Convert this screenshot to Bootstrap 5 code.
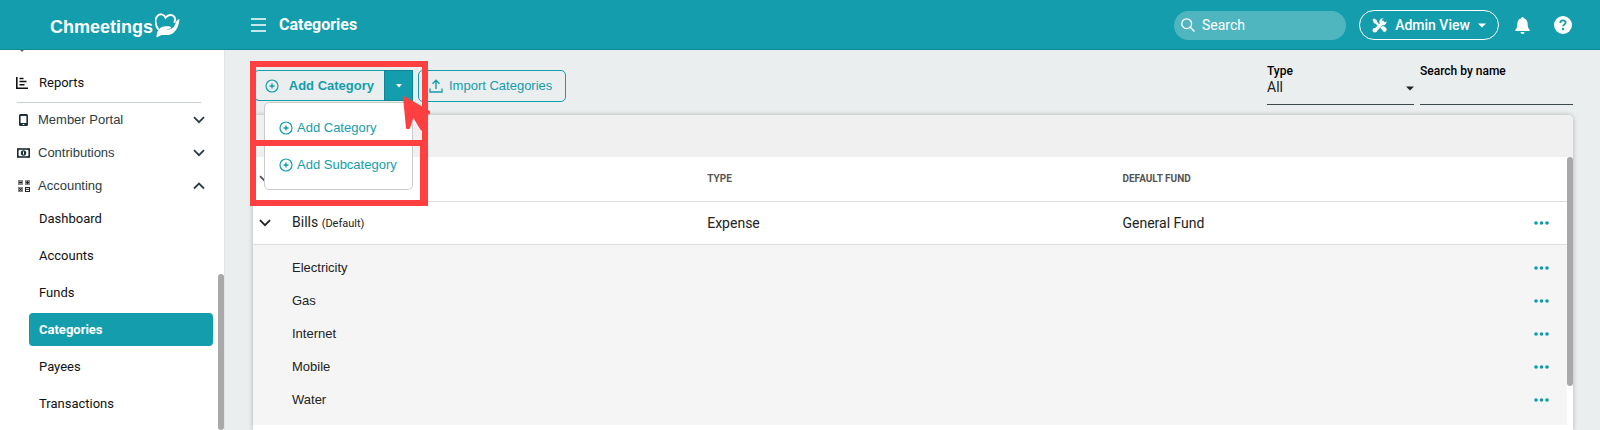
<!DOCTYPE html>
<html lang="en">
<head>
<meta charset="utf-8">
<meta name="viewport" content="width=device-width, initial-scale=1">
<title>Categories - Chmeetings</title>
<link href="https://cdn.jsdelivr.net/npm/bootstrap@5.3.0/dist/css/bootstrap.min.css" rel="stylesheet">
<style>
:root { --teal: #149dac; --mark-red: #ff4040; }
body { font-family: Roboto, "Liberation Sans", sans-serif; font-size: 14px; line-height: 20px; background: #eaeeef; color: #111; }
.arial { font-family: "Liberation Sans", Arial, sans-serif; }
svg { display: block; flex: none; }
.topbar { height: 50px; background: var(--teal); box-shadow: inset 0 -1px #108a98; color: #fff; padding-right: 28px; }
.brand-zone { width: 224px; padding-left: 50px; gap: 2px; }
.brand-name { font-weight: 700; font-size: 18px; line-height: 24px; color: #fff; }
.menu-toggle { margin-left: 27px; }
.page-title { font-size: 16px; line-height: 20px; font-weight: 700; padding-left: 13px; }
.search-pill { width: 172px; height: 29px; background: #4fb6c0; padding: 0 8px 0 7px; gap: 7px; }
.search-pill input { min-width: 0; color: #fff; outline: 0; line-height: 20px; }
.search-pill input::placeholder { color: #fff; opacity: 1; }
.view-btn { height: 30px; width: 140px; font-size: 14px; line-height: 20px; font-weight: 500; color: #fff; border: 1px solid #fff; padding: 0; margin-left: 13px; }
.plain { background: none; border: 0; padding: 0; color: inherit; }
.sidebar { width: 225px; background: #fff; border-right: 1px solid #e2e5e6; flex: none; }
.side-nav a { color: #111; text-decoration: none; }
.side-nav .current { color: #fff; }
.side-top { padding-top: 14px; }
.side-link { height: 33px; padding: 0 13px 0 16px; gap: 7px; font-size: 13px; }
.side-link span { flex: 1; }
.side-nav .side-group { color: #2c3e43; }
.side-rule { margin: 3px 17px 0 17px; border: 0; border-top: 1px solid #c9d0d2; opacity: 1; }
.sub-link { height: 33px; margin: 0 5px 4px 29px; padding-left: 10px; font-size: 13px; border-radius: 4px; }
.sub-link.current { background: var(--teal); font-weight: 700; }
.thumb { width: 6px; border-radius: 3px; background: #a9a9a9; flex: none; }
.side-thumb { margin-top: 224px; }
.content { padding: 14px 27px 0 28px; min-width: 0; }
.toolbar { height: 51px; }
.actions { padding-top: 6px; }
.btn-line { height: 32px; border: 1px solid var(--teal); color: var(--teal); font-size: 13px; line-height: 20px; padding: 0 10px; }
.btn-line.add { width: 132px; font-weight: 700; height: 31px; padding: 0 11px 0 11px; border-right: 0; }
.btn-drop { width: 29px; height: 31px; background: var(--teal); border: 1px solid #0f8693; color: #fff; padding: 0; }
.import-btn { margin-left: 5px; width: 148px; border-radius: 5px; gap: 6px; }
.add-menu { display: block; top: 32px; left: 11px; width: 149px; height: 88px; min-width: 0; padding: 6px 0; border: 1px solid #c8cccd; border-radius: 5px; }
.add-menu .dropdown-item { height: 37px; padding: 0 0 0 14px; color: var(--teal); line-height: 20px; gap: 4px; font-size: 13px; }
.frame-mark { position: absolute; border: 6px solid var(--mark-red); z-index: 1010; pointer-events: none; left: -3px; width: 178px; }
.frame-top { top: -9px; height: 85px; }
.frame-bottom { top: 70px; height: 66px; border-right-width: 8px; }
.pointer-mark { position: absolute; left: 149px; top: 25px; z-index: 1011; pointer-events: none; }
.filter { width: 153px; margin-left: 6px; }
.filter.by-type { width: 147px; }
.filter label { font-size: 12px; line-height: 14px; font-weight: 500; display: block; color: #000; }
.filter select, .filter input { display: block; width: 100%; height: 27px; border: 0; border-bottom: 1px solid #3b484c; background-color: transparent; border-radius: 0; padding: 0 0 8px; font-size: 14px; line-height: 18px; outline: 0; color: #222; appearance: none; }
.filter .caret { position: absolute; right: 0; top: 22px; }
.panel { background: #fff; border-radius: 5px 5px 0 0; box-shadow: 0 0 5px rgba(0,0,0,.25); overflow: hidden; }
.panel-head { height: 42px; background: #f0f0f0; }
.cat-table { table-layout: fixed; border-collapse: separate; border-spacing: 0; width: 100%; }
.cat-table td, .cat-table th { padding: 0; vertical-align: middle; }
.cat-table thead th { height: 45px; border-bottom: 1px solid #dedede; font-size: 10px; font-weight: 700; color: #555; }
.cat-table .parent td { height: 43px; border-bottom: 1px solid #dedede; font-size: 14px; color: #222; }
.cat-table .parent small { font-size: 11px; }
.cat-table .child td { height: 33px; background: #f5f5f5; color: #222; font-size: 13px; }
.cat-table .spacer td { background: #f5f5f5; height: 6px; }
.cat-table .spacer.end td { height: 9px; }
.col-icon { width: 39px; } .col-text { width: 31.6%; } .col-more { width: 60px; }
.more { color: #0d9aab; margin-left: 27px; display: block; }
.chev { margin-left: 6px; display: block; }
.table-thumb { height: 229px; }
</style>
</head>
<body>
<svg class="d-none" aria-hidden="true">
  <symbol id="plus" viewBox="0 0 14 14"><circle cx="7" cy="7" r="6" fill="none" stroke="currentColor" stroke-width="1.2"/><path d="M7 4.5v5M4.5 7h5" stroke="currentColor" stroke-width="1.4"/></symbol>
  <symbol id="dots" viewBox="0 0 15 4"><circle cx="2" cy="2" r="1.8"/><circle cx="7.500" cy="2" r="1.8"/><circle cx="13" cy="2" r="1.8"/></symbol>
  <symbol id="down" viewBox="0 0 12 8"><path d="M1 1.200l5 5 5-5" fill="none" stroke="currentColor" stroke-width="1.800"/></symbol>
  <symbol id="up" viewBox="0 0 12 8"><path d="M1 6.500l5-5 5 5" fill="none" stroke="currentColor" stroke-width="1.800"/></symbol>
</svg>
<div class="d-flex flex-column vh-100 overflow-hidden">
<header class="topbar d-flex align-items-center flex-shrink-0">
  <a href="#" class="brand-zone d-flex align-items-center text-decoration-none">
    <span class="brand-name arial pt-1">Chmeetings</span>
    <svg width="25" height="26" viewBox="0 0 25 26" fill="none"><path d="M3 17C0 12 0 7 2 4.500c2.500-3.500 7-2.500 8.500 1C13 2.500 17 2 19 4.500c1.300 1.500 1.400 3.500.5 5.500" stroke="#fff" stroke-width="2" stroke-linecap="round"/><path d="M1.500 25.500C1.500 20 4 15.500 8.500 14.500c2.500-.5 5-.3 6.500 0 1.600.5 1.300 2-.3 2.300l-3.700.7c5.500.6 8.500-2 10-7.500.5-1.500 1.800-2.500 3.500-3-.6 6-2.500 11.500-7 14.500-4.500 3-9 .5-12 2z" fill="#fff"/></svg>
  </a>
  <button class="plain menu-toggle" type="button" aria-label="Toggle menu"><svg width="15" height="14" viewBox="0 0 15 14"><path d="M0 1h15M0 7h15M0 13h15" stroke="#fff" stroke-width="1.300"/></svg></button>
  <h1 class="page-title mb-0 me-auto">Categories</h1>
  <label class="search-pill rounded-pill d-flex align-items-center">
    <svg width="14" height="14" viewBox="0 0 14 14" fill="none" stroke="#fff" stroke-width="1.300"><circle cx="5.700" cy="5.700" r="4.900"/><path d="M9.300 9.300L13.500 13.500"/></svg>
    <input class="plain w-100" type="search" placeholder="Search" aria-label="Search">
  </label>
  <button class="btn view-btn rounded-pill d-flex align-items-center justify-content-center gap-2" type="button">
    <svg width="15" height="15" viewBox="0 0 15 15"><path d="M3 12.500L12 3.500" stroke="#fff" stroke-width="3.200"/><path d="M14.500 3.200a3.600 3.600 0 1 1-3-3l-1.700 1.900.4 2.300 2.300.4z" fill="#fff"/><circle cx="2.800" cy="12.300" r="2.300" fill="#fff"/><path d="M0.500 1.800L2 .5l3 2 .3 1.800 2.500 2.500-1.600 1.600L3.700 5.700l-1.600-.4z" fill="#fff"/><path d="M8 9.800l2-2c1.600-.4 3 .8 4.500 2.500 1.200 1.500-.6 4.600-3 3.700z" fill="#fff" stroke="var(--teal)" stroke-width=".5"/></svg>
    Admin View
    <svg width="8" height="5" viewBox="0 0 8 5"><path d="M0 .5h8L4 4.500z" fill="#fff"/></svg>
  </button>
  <button class="plain ms-3" type="button" aria-label="Notifications"><svg width="15" height="17" viewBox="0 0 15 17" fill="#fff"><path d="M7.500 0c.8 0 1.200.6 1.200 1.300C11.500 2 12.600 4 12.600 6.500c0 3.500.8 4.800 2 6.200.6.700.2 1.300-.6 1.300H1c-.8 0-1.200-.6-.6-1.300 1.200-1.400 2-2.700 2-6.200C2.400 4 3.500 2 6.300 1.300 6.300.6 6.700 0 7.500 0zM5.500 15h4a2 2 0 0 1-4 0z"/></svg></button>
  <button class="plain ms-4" type="button" aria-label="Help"><svg width="18" height="18" viewBox="0 0 18 18"><circle cx="9" cy="9" r="9" fill="#fff"/><path d="M6.300 7c0-3.400 5.400-3.400 5.400-.4C11.700 8.500 9 8.400 9 10.300" stroke="var(--teal)" stroke-width="1.800" fill="none"/><circle cx="9" cy="13" r="1.200" fill="var(--teal)"/></svg></button>
</header>
<div class="d-flex flex-fill overflow-hidden">
  <aside class="sidebar d-flex">
    <nav class="side-nav flex-fill">
      <svg class="ms-3" width="12" height="2" viewBox="0 0 12 2"><path d="M4 0h4L6 2z" fill="#666"/></svg>
      <div class="side-top">
      <a class="side-link d-flex align-items-center" href="#"><svg width="16" height="12" viewBox="0 0 16 12"><path d="M.8 0v11.200H12M3.500 1.500h4M3.500 4.500h7M3.500 7.800h5" fill="none" stroke="#111" stroke-width="1.600"/></svg><span>Reports</span></a>
      </div>
      <hr class="side-rule">
      <a class="side-link side-group arial d-flex align-items-center" href="#"><svg width="15" height="14" viewBox="0 0 15 14"><path fill-rule="evenodd" d="M4.500 1h6q1.500 0 1.500 1.500v9q0 1.500-1.500 1.500h-6Q3 13 3 11.500v-9Q3 1 4.500 1zM4.600 3v7h5.800V3z" fill="#1c2f34"/><path d="M6.700 11.500h1.600" stroke="#fff"/></svg><span>Member Portal</span><svg width="12" height="8"><use href="#down"/></svg></a>
      <a class="side-link side-group arial d-flex align-items-center" href="#"><svg width="15" height="14" viewBox="0 0 15 14"><rect x="1.800" y="3" width="11.400" height="8" fill="none" stroke="#1c2f34" stroke-width="1.600"/><path d="M1 4.500q2 0 2-2M14 4.500q-2 0-2-2M1 9.500q2 0 2 2M14 9.500q-2 0-2 2" stroke="#1c2f34" fill="none"/><circle cx="7.500" cy="7" r="2.700" fill="#1c2f34"/><path d="M7.500 5.500v3" stroke="#fff"/></svg><span>Contributions</span><svg width="12" height="8"><use href="#down"/></svg></a>
      <a class="side-link side-group arial d-flex align-items-center" href="#"><svg width="15" height="14" viewBox="0 0 15 14"><path d="M2 1h5v5H2zM9 1h5v5H9zM2 8h5v5H2z" fill="#888"/><path d="M9 8h5v5H9z" fill="#222"/><path d="M3 3.500h3M10 3.500h3M11.500 2v3M3.300 9.300l2.400 2.400M5.700 9.300l-2.400 2.400" stroke="#222"/><path d="M10 9.700h3M10 11.500h3" stroke="#fff"/></svg><span>Accounting</span><svg width="12" height="8"><use href="#up"/></svg></a>
      <a class="sub-link d-flex align-items-center" href="#">Dashboard</a>
      <a class="sub-link d-flex align-items-center" href="#">Accounts</a>
      <a class="sub-link d-flex align-items-center" href="#">Funds</a>
      <a class="sub-link current d-flex align-items-center" href="#" aria-current="page">Categories</a>
      <a class="sub-link d-flex align-items-center" href="#">Payees</a>
      <a class="sub-link d-flex align-items-center" href="#">Transactions</a>
    </nav>
    <div class="thumb side-thumb"></div>
  </aside>
  <main class="content d-flex flex-column flex-fill">
    <div class="toolbar d-flex align-items-start flex-shrink-0">
      <div class="actions d-flex align-items-start">
      <div class="btn-group position-relative">
        <button class="btn btn-line add arial d-flex align-items-center justify-content-between" type="button"><svg width="14" height="14"><use href="#plus"/></svg>Add Category</button>
        <button class="btn btn-drop d-flex align-items-center justify-content-center" type="button" aria-label="More add options" aria-expanded="true"><svg width="6" height="4" viewBox="0 0 6 4"><path d="M0 0h6L3 3.500z" fill="#fff"/></svg></button>
        <div class="dropdown-menu add-menu arial">
          <a class="dropdown-item d-flex align-items-center" href="#"><svg width="14" height="14"><use href="#plus"/></svg>Add Category</a>
          <a class="dropdown-item d-flex align-items-center" href="#"><svg width="14" height="14"><use href="#plus"/></svg>Add Subcategory</a>
        </div>
        <div class="frame-mark frame-top"></div>
        <div class="frame-mark frame-bottom"></div>
        <svg class="pointer-mark" width="30" height="36" viewBox="0 0 30 36"><path d="M2 2L27 16.500v2l-9-1 6 13-4.500 4L11 20.500 7 33H5z" fill="#ff4040" stroke="#ff4040" stroke-width="2" stroke-linejoin="round"/></svg>
      </div>
      <button class="btn btn-line import-btn arial d-flex align-items-center" type="button"><svg width="14" height="14" viewBox="0 0 14 14" fill="none" stroke="currentColor" stroke-width="1.400"><path d="M1 9.500V13h12V9.500M7 10V1.500M3.500 4.800L7 1.300l3.500 3.500"/></svg>Import Categories</button>
      </div>
      <div class="filter by-type position-relative ms-auto"><label for="type">Type</label><select id="type"><option>All</option></select><svg class="caret" width="8" height="5" viewBox="0 0 8 5"><path d="M0 .5h8L4 4.500z" fill="#222"/></svg></div>
      <div class="filter"><label for="name">Search by name</label><input id="name" type="text"></div>
    </div>
    <section class="panel flex-fill">
      <div class="panel-head"></div>
      <div class="d-flex">
        <table class="cat-table">
          <colgroup><col class="col-icon"><col class="col-text"><col class="col-text"><col><col class="col-more"></colgroup>
          <thead><tr><th><svg class="chev" width="12" height="8"><use href="#down"/></svg></th><th></th><th>TYPE</th><th>DEFAULT FUND</th><th></th></tr></thead>
          <tbody>
            <tr class="parent"><td><svg class="chev" width="12" height="8"><use href="#down"/></svg></td><td>Bills <small>(Default)</small></td><td>Expense</td><td>General Fund</td><td><button class="plain more" type="button" aria-label="Bills actions"><svg width="15" height="4" fill="currentColor"><use href="#dots"/></svg></button></td></tr>
            <tr class="spacer"><td colspan="5"></td></tr>
            <tr class="child arial"><td></td><td colspan="3">Electricity</td><td><button class="plain more" type="button" aria-label="Electricity actions"><svg width="15" height="4" fill="currentColor"><use href="#dots"/></svg></button></td></tr>
            <tr class="child arial"><td></td><td colspan="3">Gas</td><td><button class="plain more" type="button" aria-label="Gas actions"><svg width="15" height="4" fill="currentColor"><use href="#dots"/></svg></button></td></tr>
            <tr class="child arial"><td></td><td colspan="3">Internet</td><td><button class="plain more" type="button" aria-label="Internet actions"><svg width="15" height="4" fill="currentColor"><use href="#dots"/></svg></button></td></tr>
            <tr class="child arial"><td></td><td colspan="3">Mobile</td><td><button class="plain more" type="button" aria-label="Mobile actions"><svg width="15" height="4" fill="currentColor"><use href="#dots"/></svg></button></td></tr>
            <tr class="child arial"><td></td><td colspan="3">Water</td><td><button class="plain more" type="button" aria-label="Water actions"><svg width="15" height="4" fill="currentColor"><use href="#dots"/></svg></button></td></tr>
            <tr class="spacer end"><td colspan="5"></td></tr>
          </tbody>
        </table>
        <div class="thumb table-thumb"></div>
      </div>
    </section>
  </main>
</div>
</div>
<script src="https://cdn.jsdelivr.net/npm/bootstrap@5.3.0/dist/js/bootstrap.bundle.min.js"></script>
</body>
</html>
